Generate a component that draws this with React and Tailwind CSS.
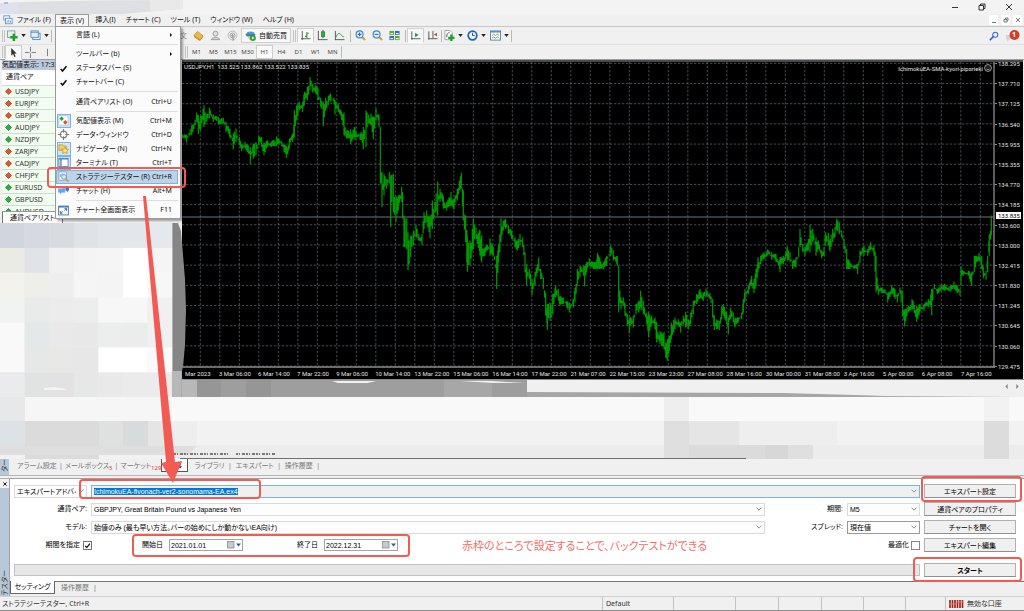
import React, { useEffect, useRef } from 'react';

// [x, high, low] in plot units
const PRICES = [
  [6,236,250],[20,238,262],[35,210,240],[50,172,200],[55,180,236],[62,180,225],[72,150,215],[80,175,200],[88,158,190],[100,178,200],
  [115,185,208],[130,188,205],[138,200,230],[150,222,250],[160,235,282],[168,220,260],[178,245,270],[185,265,288],[195,260,280],[205,270,295],
  [211,275,326],[220,265,310],[228,260,300],[236,243,270],[245,245,275],[252,262,300],[262,255,275],[275,258,275],[290,243,272],[305,258,272],
  [312,265,290],[319,272,308],[328,250,280],[338,235,260],[343,165,245],[350,150,195],[358,140,165],[368,140,170],[373,110,150],[382,95,135],
  [390,66,105],[398,85,112],[408,88,118],[414,100,135],[422,128,155],[430,140,212],[437,128,165],[445,122,150],[452,115,140],[462,128,148],
  [465,135,178],[475,145,170],[485,170,195],[492,172,240],[500,225,250],[512,222,266],[525,215,255],[540,235,255],[550,215,282],[558,165,275],
  [566,178,205],[573,175,210],[580,185,252],[588,160,195],[597,178,215],[601,215,385],[606,350,455],[612,355,420],[620,370,400],[628,350,385],
  [632,360,515],[640,355,470],[648,420,500],[655,420,465],[665,395,440],[668,410,490],[672,480,575],[680,488,580],[684,530,643],[692,540,605],
  [700,525,570],[708,508,545],[716,535,555],[726,535,568],[732,470,520],[740,465,500],[750,485,548],[757,435,520],[765,440,470],[773,378,480],
  [780,400,440],[790,420,460],[800,440,465],[813,410,450],[822,430,462],[832,400,435],[838,375,405],[844,352,400],[850,405,495],[857,480,560],
  [862,540,648],[870,555,630],[880,490,580],[888,515,550],[900,525,600],[905,540,620],[915,575,600],[930,548,600],[940,575,600],[950,600,700],
  [956,565,620],[963,488,560],[970,495,525],[977,490,520],[985,510,535],[995,525,550],[1005,545,575],[1012,555,585],[1020,535,570],[1028,545,575],
  [1035,590,650],[1040,625,690],[1048,640,670],[1056,670,718],[1065,650,690],[1076,605,645],[1082,640,670],[1090,665,700],[1097,710,780],[1102,745,822],
  [1110,740,795],[1118,715,775],[1127,690,725],[1135,700,735],[1140,720,750],[1150,725,745],[1160,735,755],[1168,740,770],[1180,730,755],[1185,695,740],
  [1192,640,690],[1200,630,665],[1210,630,660],[1214,630,692],[1220,620,650],[1228,608,630],[1240,620,640],[1252,592,640],[1270,620,640],[1280,600,630],
  [1292,570,600],[1300,585,615],[1312,600,630],[1316,630,770],[1323,725,760],[1330,725,750],[1335,745,780],[1342,775,810],[1348,785,832],[1360,780,815],
  [1368,745,775],[1376,735,770],[1382,705,755],[1390,735,775],[1400,770,805],[1406,770,845],[1415,780,805],[1425,785,820],[1430,800,860],[1440,825,865],
  [1445,830,870],[1452,828,880],[1457,860,905],[1462,850,914],[1468,840,885],[1474,800,850],[1485,785,820],[1495,790,810],[1502,800,830],[1510,780,805],
  [1517,768,815],[1525,790,820],[1532,770,805],[1540,735,775],[1550,715,745],[1560,700,730],[1570,710,735],[1578,698,725],[1590,712,730],[1598,730,785],
  [1603,780,822],[1610,790,820],[1618,795,822],[1625,750,790],[1630,745,780],[1640,770,805],[1645,785,835],[1652,755,790],[1660,770,800],[1665,785,815],
  [1675,785,800],[1685,770,790],[1690,730,770],[1695,700,735],[1705,690,715],[1715,660,690],[1722,670,712],[1728,640,690],[1734,605,650],[1742,600,625],
  [1752,590,612],[1762,582,600],[1775,590,612],[1788,595,620],[1800,605,650],[1810,600,625],[1822,572,615],[1830,590,620],[1838,615,640],[1848,605,635],
  [1856,575,605],[1860,520,575],[1868,565,590],[1875,575,600],[1885,550,585],[1890,508,590],[1898,520,560],[1908,545,600],[1915,555,580],[1925,585,608],
  [1932,575,600],[1937,530,560],[1945,532,570],[1950,550,588],[1958,520,560],[1965,515,545],[1970,490,525],[1978,500,535],[1985,525,545],[1992,550,580],
  [2000,580,640],[2010,620,640],[2022,628,640],[2033,625,655],[2040,585,620],[2052,570,600],[2063,580,600],[2072,560,585],[2082,570,600],[2088,600,710],
  [2095,690,718],[2105,695,712],[2115,700,712],[2123,712,740],[2135,688,712],[2145,700,730],[2152,715,740],[2160,695,715],[2168,705,780],[2174,760,812],
  [2185,750,770],[2196,730,760],[2210,750,798],[2220,745,770],[2232,745,765],[2245,730,755],[2255,700,778],[2263,685,700],[2272,700,715],[2283,685,705],
  [2295,685,705],[2310,690,708],[2322,678,700],[2332,690,712],[2340,700,720],[2343,632,690],[2350,645,660],[2365,645,660],[2375,650,690],[2383,600,650],
  [2390,600,620],[2397,592,615],[2405,600,640],[2410,635,668],[2418,645,672],[2423,600,650],[2428,535,600],[2434,480,540],
];

const buildBars = () => {
  let d = '';
  PRICES.forEach(([x, hi, lo], i) => {
    d += `M${x} ${hi}V${lo}`;
    const next = PRICES[i + 1];
    if (!next) return;
    for (let bx = x + 3.5; bx < next[0] - 1; bx += 3.5) {
      const t = (bx - x) / (next[0] - x);
      const top = hi + (next[1] - hi) * t;
      const bottom = lo + (next[2] - lo) * t;
      const range = bottom - top;
      const a = (Math.sin(bx * 12.9) + 1) * 0.22;
      const b = (Math.sin(bx * 7.3) + 1) * 0.22;
      d += `M${bx.toFixed(1)} ${(top + range * a).toFixed(1)}V${(bottom - range * b).toFixed(1)}`;
    }
  });
  return d;
};

const BARS = buildBars();

const PRICE_LABELS = [
  '138.295', '137.710', '137.125', '136.540', '135.955', '135.355', '134.770', '134.185',
  '133.600', '133.000', '132.415', '131.830', '131.245', '130.645', '130.060', '129.475',
];

const TIME_LABELS = [
  '3 Mar 06:00', '6 Mar 14:00', '7 Mar 22:00', '9 Mar 06:00', '10 Mar 14:00', '13 Mar 22:00', '15 Mar 06:00',
  '16 Mar 14:00', '17 Mar 22:00', '21 Mar 07:00', '22 Mar 15:00', '23 Mar 23:00', '27 Mar 08:00', '28 Mar 16:00',
  '30 Mar 00:00', '31 Mar 08:00', '3 Apr 16:00', '5 Apr 00:00', '6 Apr 08:00', '7 Apr 16:00',
];

const SYMBOLS = [
  ['USDJPY', 'down'], ['EURJPY', 'down'], ['GBPJPY', 'down'], ['AUDJPY', 'up'], ['NZDJPY', 'up'],
  ['ZARJPY', 'down'], ['CADJPY', 'down'], ['CHFJPY', 'down'], ['EURUSD', 'up'], ['GBPUSD', 'up'],
  ['AUDUSD', 'up'],
];

const MOSAIC = [
  ['#d0d5de', '#d6dae0', '#d8dce1', '#dfe2e7', '#e3e7ec', '#e3e7ec', '#e5e8ed'],
  ['#eaebe5', '#e0e4e8', '#f1f1f1', '#f5f4f4', '#f5f5f5', '#ffffff', '#f5f5f5'],
  ['#f3f2ec', '#eeefea', '#eeeeee', '#f4f5f4', '#f4f4f4', '#ffffff', '#f7f7f7'],
  ['#f1f3f3', '#e9ebea', '#ececed', '#eceeee', '#f7f7f7', '#f7f7f7', '#f0f0f1'],
  ['#f9f9f9', '#e3e8e9', '#e8e9e8', '#e8e8e8', '#eceeee', '#eaedeb', '#f0f0f0'],
  ['#f9f9f9', '#e5e8e7', '#e8e8e6', '#e7e7e7', '#ffffff', '#ffffff', '#fafafa'],
  ['#eaebec', '#e1e3e3', '#e2e2e2', '#e6e7e7', '#e9e9e9', '#ebebeb', '#ebebeb'],
];

const MENU = [
  { label: '言語 (L)', sub: true },
  null,
  { label: 'ツールバー (b)', sub: true },
  { label: 'ステータスバー (S)', icon: 'check' },
  { label: 'チャートバー (C)', icon: 'check' },
  null,
  { label: '通貨ペアリスト (O)', keys: 'Ctrl+U' },
  null,
  { label: '気配値表示 (M)', keys: 'Ctrl+M', icon: 'quotes', on: true },
  { label: 'データ・ウィンドウ', keys: 'Ctrl+D', icon: 'target' },
  { label: 'ナビゲーター (N)', keys: 'Ctrl+N', icon: 'navigator', on: true },
  { label: 'ターミナル (T)', keys: 'Ctrl+T', icon: 'terminal', on: true },
  { label: 'ストラテジーテスター (R)', keys: 'Ctrl+R', icon: 'tester', selected: true },
  { label: 'チャット (H)', keys: 'Alt+M', icon: 'chat' },
  null,
  { label: 'チャート全画面表示', keys: 'F11', icon: 'full' },
];

const ICONS = {
  check: <path d="M3 6.5l2 2.3L9.200 3.500" fill="none" stroke="#111" strokeWidth="1.700" />,
  quotes: (
    <>
      <rect x="1" y="1" width="10" height="10" fill="#fff" stroke="#9bb8cf" strokeWidth=".6" />
      <path d="M4 1.500L6.500 4 4 6.500 1.500 4z" fill="#2ea043" />
      <path d="M8 5.500L10.500 8 8 10.500 5.500 8z" fill="#e0522c" />
    </>
  ),
  target: (
    <g fill="none" stroke="#808080">
      <circle cx="6" cy="6" r="3.600" strokeWidth="1.300" />
      <path d="M6 0v4M6 8v4M0 6h4M8 6h4" strokeWidth="1.200" />
    </g>
  ),
  navigator: (
    <>
      <path d="M1 2h4l1 1.300h3V8H1z" fill="#f3cf63" stroke="#b58a1e" strokeWidth=".7" />
      <path d="M7.500 4.500l1.300 2.200 2.700.4-1.900 1.800.4 2.600-2.500-1.200L5.100 11.500l.4-2.600L3.600 7.100l2.700-.4z" fill="#ffe173" stroke="#b98a17" strokeWidth=".7" />
    </>
  ),
  terminal: (
    <>
      <rect x="1" y="1.500" width="10" height="9" fill="#fff" stroke="#4c86be" />
      <path d="M1 2h10M3.200 2v8" stroke="#4c86be" strokeWidth="1.500" />
    </>
  ),
  tester: (
    <>
      <rect x="1" y="1" width="8" height="9" fill="#f6fafd" stroke="#7e99b1" strokeWidth=".8" />
      <path d="M2.500 3.500v3M4.500 2.500v3M6.500 3v4" stroke="#5a9bd0" />
      <circle cx="6.500" cy="6.500" r="2.600" fill="#d9ecfb" stroke="#5c8fbc" strokeWidth=".9" />
      <path d="M8.500 8.500L11.500 11.500" stroke="#c79a35" strokeWidth="1.600" />
    </>
  ),
  chat: (
    <>
      <path d="M5 1h7v5h-1l-.5 2L9 6H5z" fill="#2f79c8" />
      <path d="M0 3.500h8V8.500H4L2 11V8.500H0z" fill="#62a8ea" stroke="#fff" strokeWidth=".4" />
    </>
  ),
  full: (
    <>
      <rect x=".7" y="1.200" width="10.600" height="9.600" fill="#fff" stroke="#3f76b0" />
      <path d="M1 2h10" stroke="#3f76b0" strokeWidth="1.500" />
      <path d="M7 4h2.500v2.500M5 9H2.500V6.500M9.500 4L7 6M2.500 9L5 7" stroke="#2e66a4" fill="none" />
    </>
  ),
  newChart: (
    <>
      <rect x=".6" y="1" width="8" height="7" fill="#e8f1e8" stroke="#6f8a9c" strokeWidth=".8" />
      <path d="M7.500 4v8M3.500 8h8" stroke="#18a52a" strokeWidth="2.800" />
    </>
  ),
  windows: (
    <g fill="#e4f0fb" stroke="#4d83b8" strokeWidth=".9">
      <rect x="3" y="3.500" width="8" height="7" />
      <rect x="1" y="1" width="8" height="7" />
      <path d="M1 2.500h8" />
    </g>
  ),
  book: (
    <>
      <path d="M1 6L5 1.500 11 6.500 7.500 10.500z" fill="#f0b93c" stroke="#a8741a" strokeWidth=".6" />
      <path d="M1 6l6.500 4.500L11 6.500v1.500L7.500 12 1 7.500z" fill="#c98a24" />
    </>
  ),
  person: (
    <g fill="#e1e1e1" stroke="#979797" strokeWidth="1">
      <circle cx="6" cy="4" r="2.700" />
      <path d="M1.500 10.500c0-3 9-3 9 0z" />
    </g>
  ),
  radio: (
    <g fill="none" stroke="#a0a0a0">
      <circle cx="6" cy="6" r="4.800" strokeWidth=".7" />
      <circle cx="6" cy="6" r="2.700" />
      <circle cx="6" cy="6" r="1" fill="#8a8a8a" />
      <path d="M6 6l1 5.500" strokeWidth="1.500" />
    </g>
  ),
  auto: (
    <>
      <path d="M1 5.500c0-5 10-5 10 0z" fill="#4d97d1" />
      <path d="M0 5h12L9.500 7H2.500z" fill="#3378b5" />
      <path d="M2.500 7h6v3.500l-3 1z" fill="#ecc452" />
      <circle cx="8.700" cy="8.700" r="3.200" fill="#1fa536" />
      <path d="M7.700 7l2.700 1.700-2.700 1.700z" fill="#fff" />
    </>
  ),
  bars: (
    <>
      <path d="M2.500 1v10M1 9.500h10.500" stroke="#555" fill="none" />
      <path d="M7.500 2.500v6M5.500 7h2M7.500 3.500h2" stroke="#1a9a2b" strokeWidth="1.200" />
    </>
  ),
  candles: (
    <>
      <path d="M1.500 1v10M1 10.500h10.500" stroke="#555" fill="none" />
      <path d="M6.500 0v9" stroke="#137a20" />
      <rect x="4.800" y="2" width="3.600" height="5" fill="#24b035" stroke="#137a20" strokeWidth=".7" />
    </>
  ),
  line: (
    <>
      <path d="M1.500 1v10M1 10.500h10.500" stroke="#555" fill="none" />
      <path d="M2 8c2-5 4-5 5.500-3S10 7.500 11 7.500" stroke="#1a9a2b" fill="none" />
    </>
  ),
  zoomIn: (
    <>
      <path d="M7 7l4 4" stroke="#d1a43a" strokeWidth="2.200" />
      <circle cx="5" cy="4.800" r="3.800" fill="#e0f0fc" stroke="#3f86c6" strokeWidth="1.200" />
      <path d="M5 2.800v4M3 4.800h4" stroke="#2c6fb0" strokeWidth="1.200" />
    </>
  ),
  zoomOut: (
    <>
      <path d="M7 7l4 4" stroke="#d1a43a" strokeWidth="2.200" />
      <circle cx="5" cy="4.800" r="3.800" fill="#e0f0fc" stroke="#3f86c6" strokeWidth="1.200" />
      <path d="M3 4.800h4" stroke="#2c6fb0" strokeWidth="1.200" />
    </>
  ),
  tile: (
    <>
      <rect x=".5" y="1" width="5" height="4.500" fill="#5dab3b" />
      <rect x="6.500" y="1" width="5" height="4.500" fill="#3a6ea8" />
      <rect x=".5" y="6.500" width="5" height="4.500" fill="#3a6ea8" />
      <rect x="6.500" y="6.500" width="5" height="4.500" fill="#5dab3b" />
      <path d="M1.500 4h3M7.500 4h3M1.500 9.500h3M7.500 9.500h3" stroke="#e9f5e2" strokeWidth="1.300" />
    </>
  ),
  scroll: (
    <>
      <path d="M2 1.500v9M1 9.500h10.500" stroke="#555" fill="none" />
      <path d="M5.500 3l4 2.500-4 2.500z" fill="#23a334" />
    </>
  ),
  shift: (
    <>
      <path d="M2 1.500v9M1 9.500h10.500M6.500 1v8" stroke="#555" fill="none" />
      <path d="M11 3L7.500 5 11 7z" fill="#c9542d" />
    </>
  ),
  indicator: (
    <>
      <path d="M1 .5h5.500L9 3v7.500H1z" fill="#fff" stroke="#888" strokeWidth=".8" />
      <path d="M3 8c0-4 1-5 3-5" stroke="#444" fill="none" />
      <path d="M8 5v7M4.500 8.500h7" stroke="#18a52a" strokeWidth="2.500" />
    </>
  ),
  clock: (
    <>
      <circle cx="6" cy="6" r="4.700" fill="#eaf4fd" stroke="#2465ad" strokeWidth="1.900" />
      <path d="M6 3v3h2.500" stroke="#333" fill="none" strokeWidth=".9" />
    </>
  ),
  template: (
    <>
      <rect x=".5" y="1" width="11" height="10" fill="#fff" stroke="#4d83b8" />
      <path d="M1 2h10" stroke="#4d83b8" strokeWidth="1.500" />
      <path d="M2 6l2-1.500L6 6l2-1.500L10 6" stroke="#c5532f" fill="none" strokeWidth=".8" />
      <path d="M2 9l2-1.500L6 9l2-1.500L10 9" stroke="#2a9b3a" fill="none" strokeWidth=".8" />
    </>
  ),
  cursor: <path d="M3.500 1v8.500l2-2 1.500 3.500 1.300-.6L6.900 7H9.500z" fill="#333" />,
  cross: <path d="M6 0v5M6 7v5M0 6h5M7 6h5" stroke="#777" />,
  vline: <path d="M6 2v8" stroke="#777" />,
  app: (
    <g fill="#f4f9fe" stroke="#5b93c9">
      <rect x="1" y="1" width="7" height="5" />
      <rect x="3" y="4" width="8" height="6.500" />
      <path d="M5 9V7M7 9V6M9 9V7" />
    </g>
  ),
  search: (
    <g fill="none" stroke="#3a6bcb">
      <circle cx="7.500" cy="4.500" r="3" strokeWidth="1.300" />
      <path d="M5.500 6.500L1 11" strokeWidth="2" />
    </g>
  ),
};

const Icon = ({ name, className = 'w-[11px] h-[11px]' }) => (
  <svg viewBox="0 0 12 12" className={`shrink-0 ${className}`} aria-hidden="true">{ICONS[name]}</svg>
);

const Caret = () => (
  <svg viewBox="0 0 6 4" className="w-[5px] h-[3px] shrink-0"><path d="M0 0h6L3 4z" fill="#222" /></svg>
);

const Chevron = () => (
  <svg viewBox="0 0 8 5" className="absolute right-[3px] top-[4px] w-[6px] h-[4px] pointer-events-none">
    <path d="M.7.7L4 4 7.300.7" fill="none" stroke="#6b6b6b" />
  </svg>
);

const Divider = () => <span className="w-px h-3 bg-[#b9b9b9] shrink-0" />;
const Grip = () => <span className="w-[3px] h-3 border-x border-[#c4c4c4] shrink-0" />;

const Tool = ({ name, label, pressed, caret }) => (
  <button
    type="button"
    aria-label={label}
    className={`h-[15px] flex items-center justify-center gap-[3px] ${caret ? 'w-[23px]' : 'w-[17px]'} ${pressed ? 'bg-[#f8f8f8] border border-[#cfcfcf] border-b-white' : ''}`}
  >
    <Icon name={name} />
    {caret && <Caret />}
  </button>
);

// red frame drawn round its parent
const Frame = ({ className }) => (
  <span className={`absolute border-2 border-[#f15b54] rounded-[4px] pointer-events-none z-30 ${className}`} />
);

const ViewMenu = () => (
  <div role="menu" className="absolute left-[-1px] top-full z-20 w-[126px] h-[193px] flex flex-col py-px pr-[2px] bg-[#fbfbfb] border border-[#9a9a9a] shadow-[2px_2px_2px_rgba(0,0,0,0.35)]">
    {MENU.map((item, i) => item ? (
      <button
        key={item.label}
        type="button"
        role="menuitem"
        className={`relative h-[14px] shrink-0 flex items-center text-left pr-[6px] ${item.selected ? 'bg-[#bcd4e8] outline outline-[#7fb2dd] -outline-offset-1' : ''}`}
      >
        <span className={`w-[14px] h-[14px] shrink-0 ml-px mr-[5px] flex items-center justify-center ${item.on ? 'bg-[#cfe5f7] border border-[#7db4e2]' : ''}`}>
          {item.icon && <Icon name={item.icon} />}
        </span>
        <span className="flex-1 whitespace-nowrap">{item.label}</span>
        {item.keys && <span>{item.keys}</span>}
        {item.sub && <svg viewBox="0 0 3 6" className="w-[2px] h-[4px]"><path d="M0 0l3 3-3 3z" fill="#111" /></svg>}
        {item.selected && <Frame className="-left-[9px] -right-[8px] -top-[3px] -bottom-[4px]" />}
      </button>
    ) : (
      <div key={i} role="separator" className="flex-1 flex items-center pl-[20px]"><span className="h-px w-full bg-[#dddddd]" /></div>
    ))}
  </div>
);

const TitleBar = () => (
  <header className="h-[14px] flex items-center justify-between bg-[#f3f3f3]">
    <svg viewBox="0 0 184 14" preserveAspectRatio="none" className="w-[184px] h-full">
      <path d="M0 3Q60 0 183 0v9q-30 2-60 5H0z" fill="#dedfe2" />
      <path d="M0 3h18v11H0z" fill="#dfe2ee" />
      <path d="M150 0h33v9l-33 2z" fill="#e9e9ea" />
      <path d="M4 3h4" stroke="#7790c8" />
    </svg>
    <div className="flex items-center gap-[19px] pr-[11px]">
      <button type="button" aria-label="最小化"><svg viewBox="0 0 8 8" className="w-2 h-2"><path d="M1 4.500h6" stroke="#333" /></svg></button>
      <button type="button" aria-label="元に戻す"><svg viewBox="0 0 8 8" className="w-2 h-2"><path d="M1 2.500h4.500V7H1zM2.500 2.500V1H7v4.500H5.500" fill="none" stroke="#333" /></svg></button>
      <button type="button" aria-label="閉じる"><svg viewBox="0 0 8 8" className="w-2 h-2"><path d="M1 1l6 6M7 1L1 7" stroke="#333" /></svg></button>
    </div>
  </header>
);

const MenuBar = () => (
  <nav className="h-[13px] flex items-center justify-between border-b border-[#c6c6c6] bg-[#f0f0f0]">
    <div className="flex items-center gap-[2px] h-full pl-[3px]">
      <Icon name="app" className="w-[10px] h-[10px]" />
      <button type="button" className="px-[2px]">ファイル (F)</button>
      <div className="relative h-full border border-b-0 border-[#9a9a9a] flex items-center bg-[#f6f6f6]">
        <button type="button" className="px-1">表示 (V)</button>
        <ViewMenu />
      </div>
      {['挿入(I)', 'チャート (C)', 'ツール (T)', 'ウィンドウ (W)', 'ヘルプ (H)'].map(name => (
        <button key={name} type="button" className="px-1">{name}</button>
      ))}
    </div>
    <div className="flex gap-[3px] pr-[2px]">
      {['M2 6.500h4', 'M2 3.500h3V6H2zM3.500 3.500V2H6v2.500H5', 'M2 2l4 4M6 2L2 6'].map(d => (
        <button key={d} type="button" aria-label="チャート操作" className="w-[9px] h-[10px] bg-white flex items-center justify-center">
          <svg viewBox="0 0 8 8" className="w-2 h-2"><path d={d} fill="none" stroke="#6b7885" /></svg>
        </button>
      ))}
    </div>
  </nav>
);

const Toolbars = () => (
  <div className="bg-[#f0f0f0] border-b border-[#9d9d9d]">
    <div className="h-[17px] flex items-center justify-between">
      <div className="flex items-center">
        <div className="w-[53px] flex items-center pl-[2px]">
          <Grip />
          <Tool name="newChart" label="新規チャート" caret />
          <Tool name="windows" label="表示プロファイル" caret />
          <Divider />
        </div>
        <div className="w-[137px] flex justify-end pr-[3px]">
          <button type="button" className="text-[#8a8a8a]">新規注文</button>
        </div>
        <Tool name="book" label="メタエディター" />
        <Tool name="person" label="アカウント" />
        <Tool name="radio" label="シグナル" />
        <button type="button" className="h-[15px] w-[50px] flex items-center justify-center gap-[3px] bg-[#f8f8f8] border border-[#cfcfcf] whitespace-nowrap">
          <Icon name="auto" />自動売買
        </button>
        <span className="w-[6px] flex justify-center"><Grip /></span>
        <Tool name="bars" label="バーチャート" pressed />
        <Tool name="candles" label="ローソク足" />
        <Tool name="line" label="ラインチャート" />
        <span className="w-[4px] flex justify-center"><Divider /></span>
        <Tool name="zoomIn" label="ズームイン" />
        <Tool name="zoomOut" label="ズームアウト" />
        <Tool name="tile" label="整列" />
        <span className="w-[4px] flex justify-center"><Divider /></span>
        <Tool name="scroll" label="自動スクロール" pressed />
        <Tool name="shift" label="チャートシフト" />
        <Divider />
        <Tool name="indicator" label="インディケータ" caret />
        <Tool name="clock" label="時間足" caret />
        <Tool name="template" label="テンプレート" caret />
        <Divider />
      </div>
      <div className="flex items-center gap-[6px] pr-[4px]">
        <Icon name="search" className="w-[10px] h-[10px]" />
        <span className="relative flex">
          <svg viewBox="0 0 15 12" className="w-[15px] h-[12px]">
            <path d="M1 5h8v4H5l-3 3V9H1z" fill="#d5d5d5" />
            <circle cx="9.500" cy="5" r="5" fill="#dc3a22" />
          </svg>
          <span className="absolute right-[4px] top-0 text-white font-bold">1</span>
        </span>
      </div>
    </div>
    <div className="h-[15px] flex items-center border-t border-[#e2e2e2] text-[6px] text-[#444]">
      <div className="w-[185px] flex items-center pl-[2px]">
        <Grip />
        <Tool name="cursor" label="カーソル" pressed />
        <Tool name="cross" label="クロスヘア" />
        <Tool name="vline" label="垂直線" />
      </div>
      <Grip />
      {['M1', 'M5', 'M15', 'M30', 'H1', 'H4', 'D1', 'W1', 'MN'].map(tf => (
        <button key={tf} type="button" className={`w-[17px] h-[14px] text-center ${tf === 'H1' ? 'bg-[#fafafa] border border-[#cfcfcf]' : ''}`}>{tf}</button>
      ))}
      <Divider />
    </div>
  </div>
);

const MarketWatch = () => (
  <aside className="w-[180px] shrink-0 flex flex-col">
    <div className="h-[163px] flex flex-col pl-[2px] bg-[#f0f0f0]">
      <h2 className="h-[10px] bg-[#b9c8da] leading-[10px] whitespace-nowrap">気配値表示: 17:32:05</h2>
      <div className="flex-1 min-h-0 overflow-hidden">
        <table className="w-full bg-[#f0fdf0]">
          <thead>
            <tr className="bg-white h-[15px]"><th className="text-left font-normal pl-1">通貨ペア</th></tr>
          </thead>
          <tbody>
            {SYMBOLS.map(([name, dir]) => (
              <tr key={name} className="border-t border-[#cfdccf]">
                <td>
                  <div className="flex items-center gap-[3px] pl-[3px] leading-[11px] text-[#333]">
                    <svg viewBox="0 0 8 8" className="w-[7px] h-[7px]">
                      <path d="M4 .5L7.500 4 4 7.500.5 4z" fill={dir === 'up' ? '#2fae3f' : '#e2552b'} stroke={dir === 'up' ? '#19792a' : '#a5361a'} strokeWidth=".8" />
                    </svg>
                    {name}
                  </div>
                </td>
              </tr>
            ))}
          </tbody>
        </table>
      </div>
      <div className="h-[12px] flex items-center border-t border-[#999]">
        <button type="button" className="bg-white h-full px-[7px] border-x border-[#777]">通貨ペアリスト</button>
      </div>
    </div>
    <svg viewBox="0 0 188 174" preserveAspectRatio="none" className="relative z-10 w-[188px] max-w-none flex-1 min-h-0">
      <path d="M172 0h6l3 8 2 24 2 24 1 30-1 36-2 22-1 4v26h-10z" fill="#868686" />
      {MOSAIC.map((row, r) => row.map((fill, c) => (
        <rect key={`${r}-${c}`} x={c * 24.6} y={r * 24.9} width="24.800" height="25.100" fill={fill} />
      )))}
      <path d="M172.200 148h9.500v26h-9.500z" fill="#b8b8b8" />
      <path d="M44 165l10-1 13 2-2 1H44z" fill="#f4f4f4" />
    </svg>
  </aside>
);

const ChartWindow = () => (
  <section className="flex-1 min-w-0 flex flex-col">
    <div className="flex-1 min-h-0 flex flex-col ml-[2px] mr-[1px] bg-black border-t-2 border-[#4a4a4a] font-[Roboto,sans-serif] text-[6px] leading-[7px] text-[#e0e0e0]">
      <div className="flex-1 min-h-0 flex">
        <div className="relative flex-1 min-w-0">
          <svg viewBox="6 21 2439 915" preserveAspectRatio="none" className="absolute inset-0 w-full h-full">
            <g stroke="#65727f" strokeWidth="2" strokeDasharray="7 5">
              {PRICE_LABELS.map((p, i) => <path key={p} d={`M6 ${25 + i * 60.35}H2445`} />)}
              {Array.from({ length: 41 }, (_, i) => <path key={i} d={`M${61 + i * 58.5} 21V936`} />)}
            </g>
            <path d="M6 484.500H2445" stroke="#6b7683" strokeWidth="3" />
            <path d={BARS} stroke="#009900" strokeWidth="3.600" fill="none" />
            <path d="M6 933H2445M2442 21V936" stroke="#8a8a8a" strokeWidth="4" fill="none" />
          </svg>
          <p className="absolute left-[2px] top-px">USDJPY,H1&nbsp; 133.525 133.862 133.522 133.835</p>
          <p className="absolute right-[3px] top-[2px] flex items-center gap-px">
            IchimokuEA-SMA-kyori-pipsrieki
            <svg viewBox="0 0 8 8" className="w-[8px] h-[8px]"><circle cx="4" cy="4" r="3.400" fill="none" stroke="#ccc" strokeWidth=".8" /><path d="M2.500 3h1M4.500 3h1M2.300 4.800q1.700 1.700 3.400 0" stroke="#ccc" fill="none" strokeWidth=".8" /></svg>
          </p>
        </div>
        <div className="relative w-[28px] flex flex-col justify-between -my-[2px]">
          {PRICE_LABELS.map(p => (
            <span key={p} className="flex items-center gap-px"><i className="w-[2px] h-px bg-[#8a8a8a]" />{p}</span>
          ))}
          <span className="absolute left-[1px] right-[2px] top-[49%] bg-white text-black px-[2px]">133.835</span>
        </div>
      </div>
      <div className="h-[11px] flex items-center pr-[23px] whitespace-nowrap">
        <span className="w-[37px] pl-[3px]">Mar 2023</span>
        {TIME_LABELS.map(t => <span key={t} className="flex-1 w-0">{t}</span>)}
      </div>
    </div>
    <div className="relative h-[18px] bg-[#f0f0f0] border-t border-[#8d8d8d]">
      <svg viewBox="0 0 844 17" preserveAspectRatio="none" className="w-full h-full">
        <path d="M0 0h17v17H0z" fill="#b8b8b8" />
        <path d="M17 0h330v17H17z" fill="#9e9e9e" />
        <path d="M17 0h24v17H17zM66 0h25v17H66z" fill="#969696" />
        <path d="M264 0h48v17h-48z" fill="#a7a7a7" />
        <path d="M152 1h44l-8 2h-30zM280 1h32l32 2h-30z" fill="#f0f0f0" />
        <path d="M347 12l256 1 72 2 30 1 139 1H347z" fill="#a6a6a6" />
      </svg>
      <div className="absolute right-[5px] top-[4px] flex gap-[8px]">
        <svg viewBox="0 0 3 6" className="w-[3px] h-[5px]"><path d="M3 0L0 3l3 3z" fill="#8a8a8a" /></svg>
        <svg viewBox="0 0 3 6" className="w-[3px] h-[5px]"><path d="M0 0l3 3-3 3z" fill="#8a8a8a" /></svg>
      </div>
    </div>
  </section>
);

const BlurredTerminal = () => (
  <svg viewBox="0 0 1024 62" preserveAspectRatio="none" className="w-full h-[62px]">
    <path d="M0 0h1024v62H0z" fill="#f9f9f9" />
    <path d="M0 24h1024v38H0z" fill="#f2f2f2" />
    <path d="M172 48h852v14H172z" fill="#ececec" />
    <path d="M0 0h25v24H0z" fill="#e6e8ea" />
    <path d="M25 0h147v24H25z" fill="#f6f6f6" />
    <path d="M0 24h25v25H0z" fill="#dde2e4" />
    <path d="M25 24h74v38H25z" fill="#dbdbdb" />
    <path d="M99 24h24v25H99z" fill="#dfe1e1" />
    <path d="M123 24h25v25h-25z" fill="#d8dbdb" />
    <path d="M148 24h24v25h-24z" fill="#e5e5e5" />
    <path d="M172 24h25v25h-25z" fill="#eeeeee" />
    <path d="M0 49h197l-10 9H0z" fill="#dedede" />
    <path d="M664 0h25v24h-25z" fill="#eeeeee" />
    <path d="M664 24h25v38h-25z" fill="#dfdfdf" />
    <path d="M689 24h50v24h-50z" fill="#e5e5e5" />
    <path d="M739 24h98v24h-98z" fill="#eeeeee" />
    <path d="M689 48h76v14h-76z" fill="#dadcdb" />
    <path d="M765 48h23v14h-23z" fill="#d5d8d7" />
    <path d="M788 48h25v14h-25z" fill="#dfdfdf" />
    <path d="M984 0h25v24h-25z" fill="#f2f2f2" />
    <path d="M984 24h25v38h-25z" fill="#dcdcdc" />
    <path d="M174 57h56M236 57h40" stroke="#777" strokeWidth="2" strokeDasharray="2 1 1 2 3 1" />
    <path d="M180 61.500h566" stroke="#6f6f6f" />
  </svg>
);

const SideStrip = ({ children }) => (
  <div className="w-[9px] shrink-0 bg-[#b7c8db] flex items-start overflow-hidden">
    <span className="[writing-mode:vertical-rl] [text-orientation:sideways] rotate-180 text-[7px] leading-[9px] text-[#333] whitespace-nowrap">{children}</span>
  </div>
);

const TerminalTabs = () => (
  <div className="flex h-[17px] border-b border-[#b5b5b5] bg-[#f0f0f0] text-[#777]">
    <SideStrip>ター</SideStrip>
    <div className="flex items-start pl-[8px] leading-[13px] whitespace-nowrap">
      <button type="button">アラーム設定</button><span className="w-[8px] text-center">|</span>
      <button type="button">メールボックス<sub className="text-[6px] text-[#ee3a33]">5</sub></button><span className="w-[8px] text-center">|</span>
      <button type="button">マーケット<sub className="text-[6px] text-[#ee3a33]">129</sub></button>
      <button type="button" className="mr-[6px] w-[27px] h-[13px] bg-white border border-t-0 border-[#555] text-black overflow-hidden">記事</button>
      <button type="button">ライブラリ</button><span className="w-[11px] text-center">|</span>
      <button type="button">エキスパート</button><span className="w-[11px] text-center">|</span>
      <button type="button">操作履歴</button><span className="w-[11px] text-center">|</span>
    </div>
  </div>
);

const Select = ({ id, value, label, className = '', strong }) => (
  <div className={`relative h-[13px] ${className}`}>
    <select id={id} aria-label={label} defaultValue={value} className={`block w-full h-full appearance-none bg-[#fdfdfd] border pl-[2px] pr-[10px] leading-[11px] overflow-hidden ${strong ? 'border-[#9a9a9a]' : 'border-[#dadada]'}`}>
      <option>{value}</option>
    </select>
    <Chevron />
  </div>
);

const ActionButton = ({ children, className = '' }) => (
  <button type="button" className={`w-full h-[14px] bg-[#f0f0f0] border border-[#b0b0b0] border-b-[#8f8f8f] leading-[11px] ${className}`}>{children}</button>
);

const DateBox = ({ id, label, value }) => (
  <>
    <label htmlFor={id} className="w-[22px]">{label}</label>
    <div className="relative w-[74px] h-[12px] ml-[5px]">
      <input id={id} defaultValue={value} className="block w-full h-full bg-white border border-[#a5a5a5] pl-px" />
      <svg viewBox="0 0 14 8" className="absolute right-[2px] top-[2px] w-[14px] h-[8px] pointer-events-none">
        <rect x=".5" y=".5" width="6.500" height="6.500" fill="#c9c9cf" stroke="#8b8b93" strokeWidth=".8" />
        <path d="M9 2.500h5L11.500 5.500z" fill="#2f5c94" />
      </svg>
    </div>
  </>
);

const TesterPanel = () => {
  const expertRef = useRef(null);

  useEffect(() => {
    expertRef.current?.focus();
    expertRef.current?.select();
  }, []);

  return (
    <section className="flex mt-[2px] bg-[#f0f0f0]">
      <div className="w-[9px] flex flex-col border-t border-[#b5b5b5]">
        <button type="button" aria-label="閉じる" className="h-[9px] flex items-center justify-center">
          <svg viewBox="0 0 6 6" className="w-[4px] h-[4px]"><path d="M.5.5l5 5M5.500.5l-5 5" stroke="#222" strokeWidth="1.500" /></svg>
        </button>
        <div className="flex-1 flex items-end bg-[#b7c8db]"><SideStrip>テスター</SideStrip></div>
      </div>
      <div className="flex-1 min-w-0 flex flex-col border-t border-l border-[#a2a2a2] font-['Liberation_Sans','Noto_Sans_CJK_JP',sans-serif] text-black">
        <form className="bg-white pt-[5px] pl-[4px] pr-[8px] pb-[4px] border-b border-[#777]">
          <div className="grid grid-cols-[73px_minmax(0,674px)_minmax(0,1fr)_73px_92px] gap-x-[4px] gap-y-[4px] items-center">
            <Select label="種類" value="エキスパートアドバイザ" />
            <div className="col-span-3 relative">
              <input
                ref={expertRef}
                aria-label="エキスパート"
                defaultValue="IchimokuEA-fivonach-ver2-sonomama-EA.ex4"
                className="block w-full h-[13px] bg-[#f0f0f0] border border-[#76b5e8] pl-[2px] outline-none selection:bg-[#0078d7] selection:text-white"
              />
              <Chevron />
              <Frame className="-left-[12px] -top-[6px] w-[182px] h-[20px]" />
            </div>
            <div className="relative">
              <ActionButton>エキスパート設定</ActionButton>
              <Frame className="-left-[3px] -right-[6px] -top-[8px] -bottom-[4px]" />
            </div>

            <label htmlFor="symbol" className="text-right">通貨ペア:</label>
            <Select id="symbol" value="GBPJPY, Great Britain Pound vs Japanese Yen" />
            <label htmlFor="period" className="text-right">期間:</label>
            <Select id="period" value="M5" />
            <ActionButton>通貨ペアのプロパティ</ActionButton>

            <label htmlFor="model" className="text-right">モデル:</label>
            <Select id="model" value="始値のみ (最も早い方法。バーの始めにしか動かないEA向け)" />
            <label htmlFor="spread" className="text-right">スプレッド:</label>
            <Select id="spread" value="現在値" strong />
            <ActionButton>チャートを開く</ActionButton>

            <div className="col-span-4 flex items-center justify-between h-[14px]">
              <div className="flex items-center">
                <label htmlFor="useDate" className="w-[66px] text-right">期間を指定</label>
                <span className="relative ml-[3px] flex">
                  <input id="useDate" type="checkbox" defaultChecked className="appearance-none w-[9px] h-[9px] bg-white border border-[#888] checked:border-[#777]" />
                  <Icon name="check" className="absolute inset-0 w-[9px] h-[9px] pointer-events-none" />
                </span>
                <div className="relative ml-[50px] flex items-center">
                  <DateBox id="from" label="開始日" value="2021.01.01" />
                  <span className="w-[54px]" />
                  <DateBox id="to" label="終了日" value="2022.12.31" />
                  <Frame className="-left-[10px] -right-[12px] -top-[5px] -bottom-[6px]" />
                </div>
                <p className="ml-[64px] pt-[2px] text-[11px] leading-[12px] text-[#f0706b] whitespace-nowrap">赤枠のところで設定することで、バックテストができる</p>
              </div>
              <div className="flex items-center gap-[2px]">
                <label htmlFor="optimize">最適化</label>
                <input id="optimize" type="checkbox" className="appearance-none w-[9px] h-[9px] bg-white border border-[#888]" />
              </div>
            </div>
            <ActionButton>エキスパート編集</ActionButton>

            <div className="col-span-4 mt-[7px] h-[12px] bg-[#e6e6e6] border border-[#c2c2c2]" role="progressbar" aria-label="進捗" />
            <div className="relative mt-[7px]">
              <ActionButton className="font-bold">スタート</ActionButton>
              <Frame className="-left-[11px] -right-[6px] -top-[6px] -bottom-[5px]" />
            </div>
          </div>
        </form>
        <div className="h-[14px] flex items-start leading-[12px]">
          <button type="button" className="w-[45px] h-[13px] -mt-px bg-white border border-t-0 border-[#666]">セッティング</button>
          <button type="button" className="ml-[6px] text-[#777]">操作履歴</button>
          <span className="ml-[5px] text-[#777]">|</span>
        </div>
      </div>
    </section>
  );
};

const StatusBar = () => (
  <footer className="h-[15px] flex items-center border-y border-[#d2d2d2] border-b-[#8a8a8a] bg-[#f0f0f0] text-[#333] whitespace-nowrap">
    <span className="flex-1 pl-[2px]">ストラテジーテスター, Ctrl+R</span>
    <span className="w-[71px] h-full flex items-center border-l border-[#c2c2c2] pl-[3px]">Default</span>
    {[62, 43, 43, 42, 42, 40].map((w, i) => (
      <span key={i} style={{ width: w }} className="h-full border-l border-[#c2c2c2]" />
    ))}
    <span className="w-[79px] h-full flex items-center gap-[3px] border-l border-[#c2c2c2] pl-[3px]">
      <svg viewBox="0 0 15 8" className="w-[15px] h-[8px]">
        <path d="M1 0v8M3.500 0v8M6 0v8M8.500 0v8M11 0v8M13.500 0v8" stroke="#a3281c" strokeWidth="1.700" />
        <path d="M0 4h8M8 2h6" stroke="#d88a80" strokeWidth=".7" />
      </svg>
      無効な口座
    </span>
  </footer>
);

const App = () => (
  <div className="relative min-h-screen flex flex-col bg-[#f0f0f0] overflow-hidden font-['Noto_Sans','Noto_Sans_CJK_JP',sans-serif] text-[7px] leading-[10px] text-[#111] [font-feature-settings:'palt']">
    <TitleBar />
    <MenuBar />
    <Toolbars />
    <main className="flex-1 min-h-[320px] flex">
      <MarketWatch />
      <ChartWindow />
    </main>
    <BlurredTerminal />
    <TerminalTabs />
    <TesterPanel />
    <StatusBar />
    <svg viewBox="0 0 40 290" className="absolute left-[142px] top-[196px] w-[40px] h-[290px] z-40 pointer-events-none">
      <path d="M1 0h3l29 266 7-1-9 22-12-20 5-1z" fill="#f15b54" />
    </svg>
  </div>
);

export default App;
